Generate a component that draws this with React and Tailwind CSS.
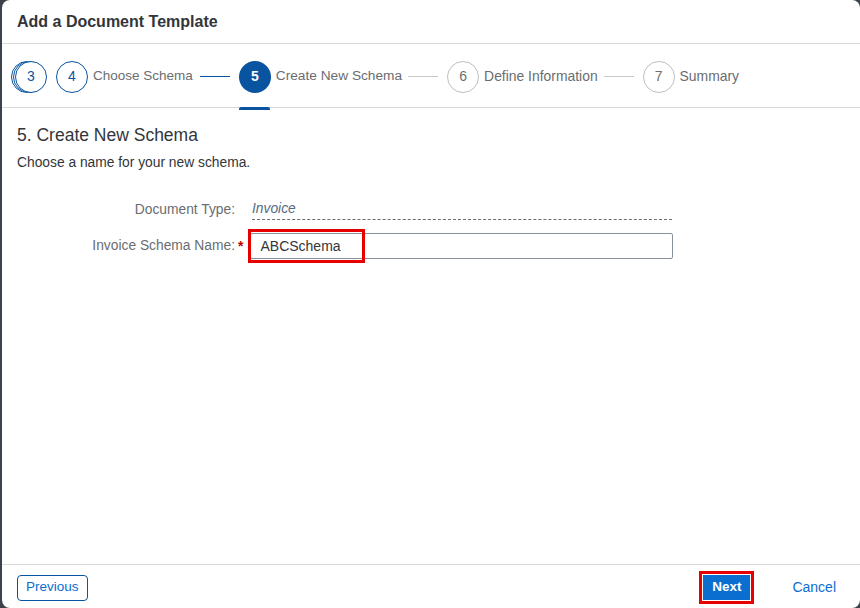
import React from "react";

const font = { fontFamily: '"Liberation Sans", Arial, sans-serif' };

function Circle({ n, state }) {
  if (state === "active")
    return (
      <div className="w-8 h-8 rounded-full bg-[#0854a0] text-white flex items-center justify-center text-[14px] font-bold">{n}</div>
    );
  if (state === "done")
    return (
      <div className="w-8 h-8 rounded-full border border-[#0854a0] bg-white text-[#0854a0] flex items-center justify-center text-[14px]">{n}</div>
    );
  return (
    <div className="w-8 h-8 rounded-full border border-[#bfbfbf] bg-white text-[#6a6d70] flex items-center justify-center text-[14px]">{n}</div>
  );
}

export default function App() {
  return (
    <div className="w-[860px] h-[608px] bg-[#3b4249] overflow-hidden" style={font}>
      <div className="ml-[2px] w-[858px] h-[608px] bg-white rounded-[8px] flex flex-col overflow-hidden">
        <div className="h-[44px] border-b border-[#d9d9d9] flex items-center px-[15px] shrink-0">
          <div className="text-[16px] font-bold text-[#32363a]">Add a Document Template</div>
        </div>
        <div className="h-[64px] border-b border-[#d9d9d9] flex items-center pl-[9px] pt-[2px] shrink-0 relative">
          <div className="relative w-[36px] h-8 mr-[9px]">
            <div className="absolute left-0 top-0 w-8 h-8 rounded-full border border-[#0854a0] bg-white"></div>
            <div className="absolute left-[2px] top-0 w-8 h-8 rounded-full border border-[#0854a0] bg-white"></div>
            <div className="absolute left-[4px] top-0 w-8 h-8 rounded-full border border-[#0854a0] bg-white text-[#0854a0] flex items-center justify-center text-[14px]">3</div>
          </div>
          <Circle n="4" state="done" />
          <span className="ml-[5px] text-[13.5px] text-[#6a6d70]">Choose Schema</span>
          <div className="mx-[7px] w-[30px] h-px bg-[#0854a0]"></div>
          <div className="relative ml-[2px]">
            <Circle n="5" state="active" />
            <div className="absolute left-0 -bottom-[17px] w-[31px] h-[3px] bg-[#0854a0] rounded-t-[2px]"></div>
          </div>
          <span className="ml-[5px] text-[13.7px] text-[#6a6d70]">Create New Schema</span>
          <div className="mx-[6px] w-[30px] h-px bg-[#c8c8c8]"></div>
          <div className="ml-[3px]"><Circle n="6" state="todo" /></div>
          <span className="ml-[5px] text-[13.9px] text-[#6a6d70]">Define Information</span>
          <div className="ml-[6px] mr-[6px] w-[30px] h-px bg-[#c8c8c8]"></div>
          <div className="ml-[3px]"><Circle n="7" state="todo" /></div>
          <span className="ml-[5px] text-[13.9px] text-[#6a6d70]">Summary</span>
        </div>
        <div className="flex-1 px-[15px] pt-[16px]">
          <div className="text-[17.5px] text-[#32363a] leading-[22px]">5. Create New Schema</div>
          <div className="mt-[9px] text-[13.8px] text-[#32363a] leading-[16px]">Choose a name for your new schema.</div>
          <div className="mt-[30px] flex items-start">
            <div className="w-[218px] text-right text-[13.8px] text-[#6a6d70] pt-[1px] leading-[16px]">Document Type:</div>
            <div className="ml-[17px] w-[420px] border-b border-dashed border-[#6a6d70] text-[13.8px] italic text-[#556b82] pb-[2px] leading-[16px]">Invoice</div>
          </div>
          <div className="mt-[13px] flex items-center">
            <div className="w-[218px] text-right text-[13.8px] text-[#6a6d70]">Invoice Schema Name:</div>
            <span className="ml-[3px] text-[#bb0000] text-[14px] font-bold">*</span>
            <div className="relative ml-[7px] w-[423px] h-[26px] border border-[#89919a] rounded-[2px] flex items-center pl-[9px] text-[14px] text-[#32363a]">
              ABCSchema
              <div className="absolute -left-[3px] -top-[5px] w-[117px] h-[34px] border-[3px] border-[#e60000]"></div>
            </div>
          </div>
        </div>
        <div className="h-[44px] border-t border-[#d9d9d9] flex items-center px-[15px] pt-[2px] shrink-0">
          <div className="h-[26px] px-[8px] border border-[#0854a0] rounded-[4px] text-[#0a6ed1] text-[13.5px] flex items-center">Previous</div>
          <div className="flex-1"></div>
          <div className="border-[3px] border-[#e60000] p-px">
            <div className="h-[25px] px-[9px] bg-[#0a6ed1] text-white text-[13.5px] font-bold flex items-center">Next</div>
          </div>
          <div className="ml-[38px] mr-[9px] text-[#0a6ed1] text-[14px]">Cancel</div>
        </div>
      </div>
    </div>
  );
}
